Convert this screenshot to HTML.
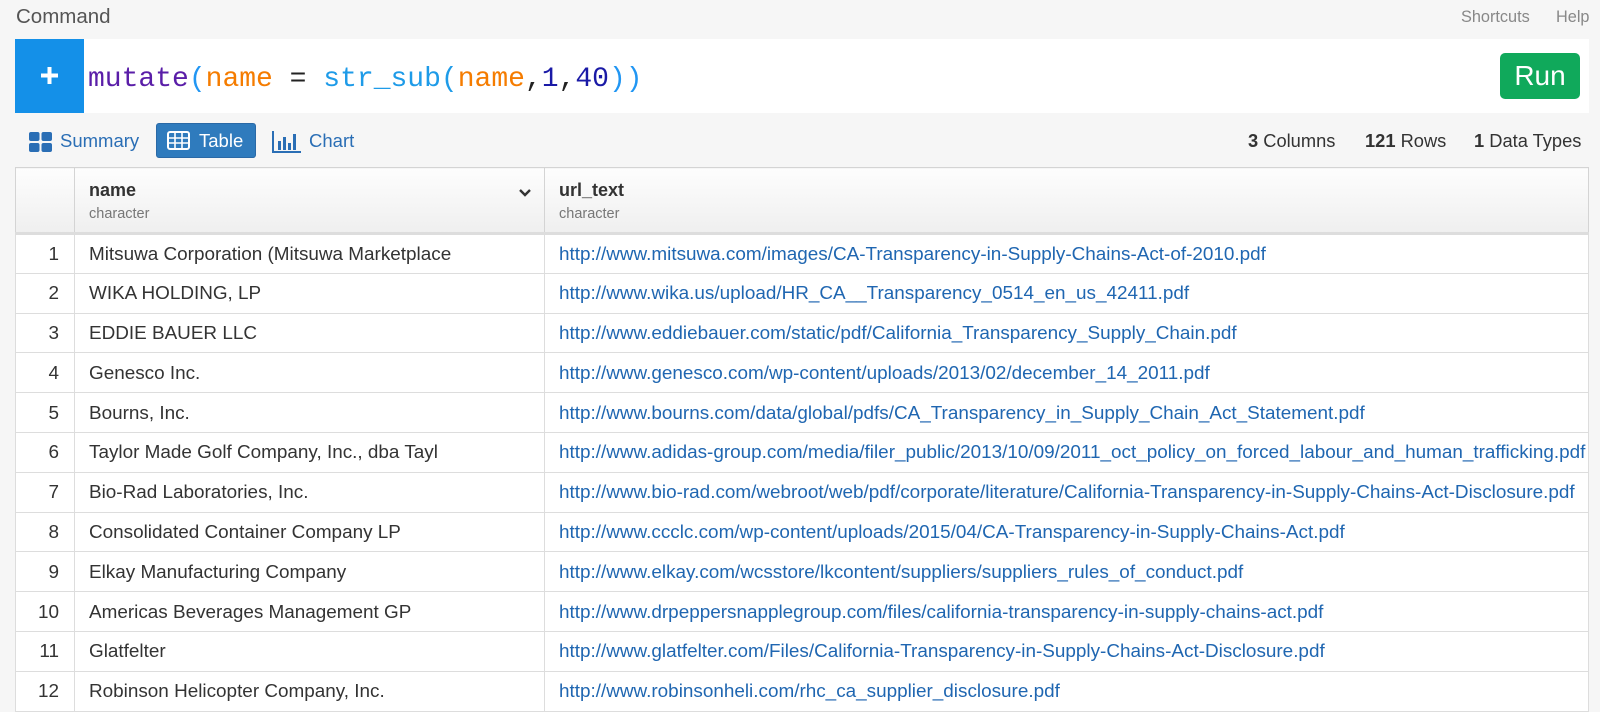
<!DOCTYPE html>
<html><head><style>
*{box-sizing:border-box;margin:0;padding:0}
body{width:1600px;height:700px;overflow:hidden;background:#f6f6f6;font-family:"Liberation Sans",Arial,sans-serif;position:relative}
.abs{position:absolute}
.title{left:16px;top:5px;font-size:20.5px;color:#555}
.top{top:8px;font-size:16.3px;color:#888}
.bar{left:15px;top:39px;width:1574px;height:74px;background:#fff}
.plus{left:15px;top:39px;width:69px;height:74px;background:#1490e8}
.code{left:88px;top:60px;font-family:"Liberation Mono","DejaVu Sans Mono",monospace;font-size:28px;line-height:40px}
.run{left:1500px;top:53px;width:80px;height:46px;background:#10a95b;border-radius:5px;color:#fff;font-size:28px;text-align:center;line-height:46px}
.tab{top:130px;font-size:18.5px;color:#2a6eb5;line-height:22px}
.tbtn{left:156px;top:123px;width:100px;height:35px;background:#2f7bbd;border:1px solid #2a69a6;border-radius:3px;color:#fff}
.stat{top:130px;font-size:18.3px;color:#333}
table{position:absolute;left:15px;top:167px;width:1574px;border-collapse:collapse;table-layout:fixed;background:#fff;font-size:18.9px}
th{height:66px;background:linear-gradient(#fdfdfd,#efefef);border:1px solid #d4d4d4;border-bottom:3px solid #ddd;text-align:left;vertical-align:top;padding:12px 14px 0;font-weight:bold;color:#333;position:relative;font-size:18px}
th small{display:block;font-weight:normal;font-size:14.5px;color:#777;margin-top:5px}
td{height:39.8px;border:1px solid #ddd;padding:2px 14px 0;white-space:nowrap;overflow:hidden;color:#333}
td:first-child{text-align:right;padding-right:15px}
td a{color:#1f66b1;text-decoration:none}
</style></head><body>
<div class="abs title">Command</div>
<div class="abs top" style="left:1461px">Shortcuts</div>
<div class="abs top" style="left:1556px">Help</div>
<div class="abs bar"></div>
<div class="abs plus"><svg style="position:absolute;left:24px;top:26px" width="21" height="21"><path d="M10.5 2V19M2 10.5H19" stroke="#fff" stroke-width="4"/></svg></div>
<div class="abs code"><span style="color:#5a1ea8">mutate</span><span style="color:#2196f3">(</span><span style="color:#f57c00">name</span> <span style="color:#222">=</span> <span style="color:#1e9be8">str_sub(</span><span style="color:#f57c00">name</span><span style="color:#222">,</span><span style="color:#1a1aa6">1</span><span style="color:#222">,</span><span style="color:#1a1aa6">40</span><span style="color:#2196f3">))</span></div>
<div class="abs run">Run</div>

<svg class="abs" style="left:29px;top:132px" width="23" height="20"><rect x="0" y="0" width="10.5" height="9" rx="2" fill="#2a6eb5"/><rect x="12.5" y="0" width="10.5" height="9" rx="2" fill="#2a6eb5"/><rect x="0" y="11" width="10.5" height="9" rx="2" fill="#2a6eb5"/><rect x="12.5" y="11" width="10.5" height="9" rx="2" fill="#2a6eb5"/></svg>
<div class="abs tab" style="left:60px">Summary</div>
<div class="abs tbtn"></div>
<svg class="abs" style="left:167px;top:131px" width="23" height="19"><rect x="1" y="1" width="21" height="17" rx="2" fill="none" stroke="#fff" stroke-width="2"/><path d="M1 7H22M1 12H22M8 1V18M15 1V18" stroke="#fff" stroke-width="1.6"/></svg>
<div class="abs tab" style="left:199px;color:#fff">Table</div>
<svg class="abs" style="left:272px;top:131px" width="29" height="22"><path d="M1 0V21H29" stroke="#2a6eb5" stroke-width="2" fill="none"/><rect x="6" y="10" width="3" height="9" fill="#2a6eb5"/><rect x="11" y="6" width="3" height="13" fill="#2a6eb5"/><rect x="16" y="12" width="3" height="7" fill="#2a6eb5"/><rect x="21" y="3" width="3" height="16" fill="#2a6eb5"/></svg>
<div class="abs tab" style="left:309px">Chart</div>
<div class="abs stat" style="left:1248px"><b>3</b> Columns</div>
<div class="abs stat" style="left:1365px"><b>121</b> Rows</div>
<div class="abs stat" style="left:1474px"><b>1</b> Data Types</div>

<table>
<colgroup><col style="width:59px"><col style="width:470px"><col></colgroup>
<tr><th></th><th>name<small>character</small><svg style="position:absolute;right:12px;top:20px" width="14" height="10"><path d="M2 2L7 7L12 2" stroke="#333" stroke-width="2.4" fill="none"/></svg></th><th>url_text<small>character</small></th></tr>
<tr><td>1</td><td>Mitsuwa Corporation (Mitsuwa Marketplace</td><td><a>http://www.mitsuwa.com/images/CA-Transparency-in-Supply-Chains-Act-of-2010.pdf</a></td></tr>
<tr><td>2</td><td>WIKA HOLDING, LP</td><td><a>http://www.wika.us/upload/HR_CA__Transparency_0514_en_us_42411.pdf</a></td></tr>
<tr><td>3</td><td>EDDIE BAUER LLC</td><td><a>http://www.eddiebauer.com/static/pdf/California_Transparency_Supply_Chain.pdf</a></td></tr>
<tr><td>4</td><td>Genesco Inc.</td><td><a>http://www.genesco.com/wp-content/uploads/2013/02/december_14_2011.pdf</a></td></tr>
<tr><td>5</td><td>Bourns, Inc.</td><td><a>http://www.bourns.com/data/global/pdfs/CA_Transparency_in_Supply_Chain_Act_Statement.pdf</a></td></tr>
<tr><td>6</td><td>Taylor Made Golf Company, Inc., dba Tayl</td><td><a>http://www.adidas-group.com/media/filer_public/2013/10/09/2011_oct_policy_on_forced_labour_and_human_trafficking.pdf</a></td></tr>
<tr><td>7</td><td>Bio-Rad Laboratories, Inc.</td><td><a>http://www.bio-rad.com/webroot/web/pdf/corporate/literature/California-Transparency-in-Supply-Chains-Act-Disclosure.pdf</a></td></tr>
<tr><td>8</td><td>Consolidated Container Company LP</td><td><a>http://www.ccclc.com/wp-content/uploads/2015/04/CA-Transparency-in-Supply-Chains-Act.pdf</a></td></tr>
<tr><td>9</td><td>Elkay Manufacturing Company</td><td><a>http://www.elkay.com/wcsstore/lkcontent/suppliers/suppliers_rules_of_conduct.pdf</a></td></tr>
<tr><td>10</td><td>Americas Beverages Management GP</td><td><a>http://www.drpeppersnapplegroup.com/files/california-transparency-in-supply-chains-act.pdf</a></td></tr>
<tr><td>11</td><td>Glatfelter</td><td><a>http://www.glatfelter.com/Files/California-Transparency-in-Supply-Chains-Act-Disclosure.pdf</a></td></tr>
<tr><td>12</td><td>Robinson Helicopter Company, Inc.</td><td><a>http://www.robinsonheli.com/rhc_ca_supplier_disclosure.pdf</a></td></tr>
</table>
</body></html>
